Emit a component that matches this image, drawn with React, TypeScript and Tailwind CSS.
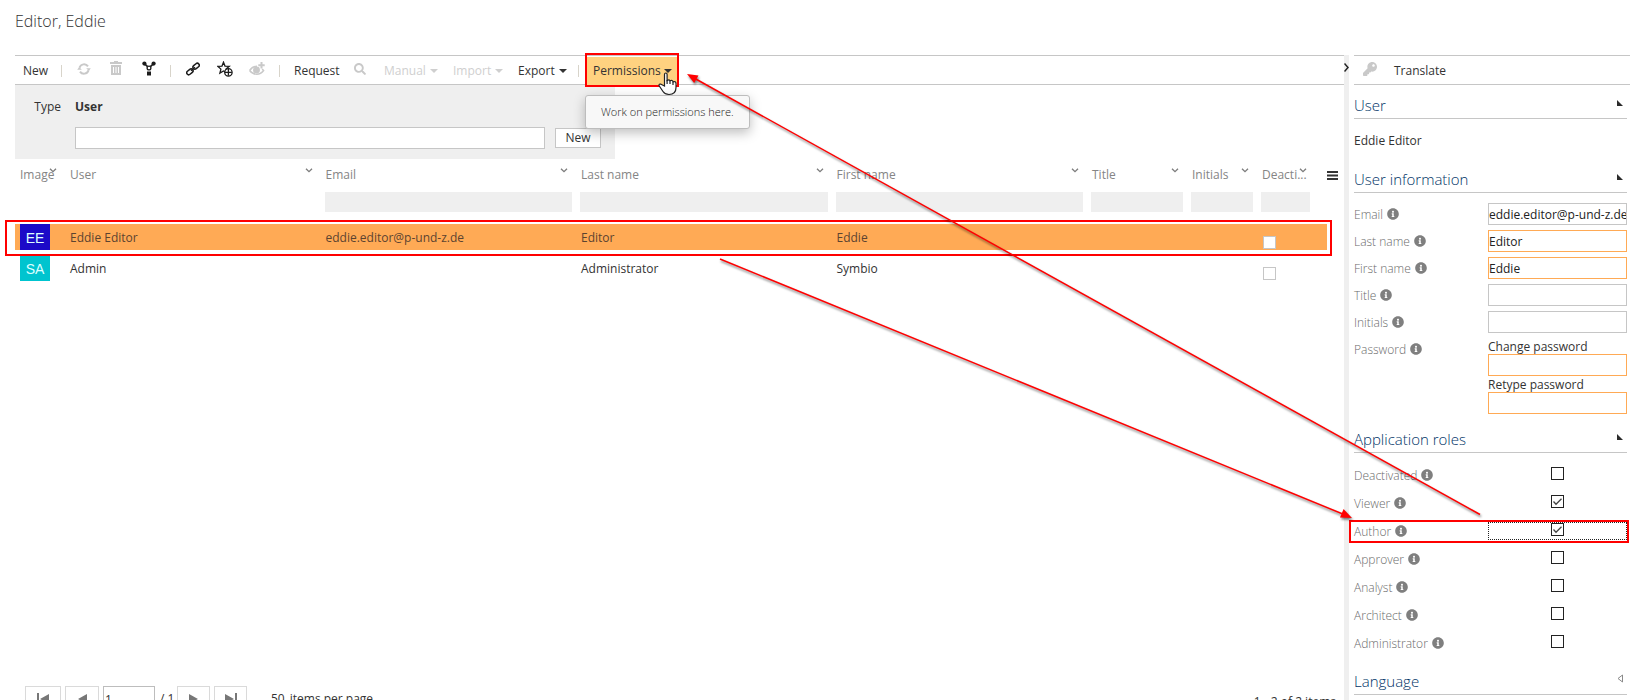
import React from 'react';
import { FaInfoCircle, FaKey, FaSearch } from 'react-icons/fa';

type Column = { label: string; filter: boolean };

const COLUMNS: Column[] = [
  { label: 'Image', filter: false },
  { label: 'User', filter: false },
  { label: 'Email', filter: true },
  { label: 'Last name', filter: true },
  { label: 'First name', filter: true },
  { label: 'Title', filter: true },
  { label: 'Initials', filter: true },
  { label: 'Deacti...', filter: true },
];

const USERS = [
  { badge: 'EE', color: 'bg-[#1c0ac8]', name: 'Eddie Editor', email: 'eddie.editor@p-und-z.de', last: 'Editor', first: 'Eddie', selected: true },
  { badge: 'SA', color: 'bg-[#00c4cf]', name: 'Admin', email: '', last: 'Administrator', first: 'Symbio', selected: false },
];

const FIELDS = [
  { label: 'Email', value: 'eddie.editor@p-und-z.de', required: false },
  { label: 'Last name', value: 'Editor', required: true },
  { label: 'First name', value: 'Eddie', required: true },
  { label: 'Title', value: '', required: false },
  { label: 'Initials', value: '', required: false },
];

const ROLES = [
  { label: 'Deactivated', checked: false },
  { label: 'Viewer', checked: true },
  { label: 'Author', checked: true },
  { label: 'Approver', checked: false },
  { label: 'Analyst', checked: false },
  { label: 'Architect', checked: false },
  { label: 'Administrator', checked: false },
];

const Separator = () => <span className="h-3 w-px shrink-0 bg-[#d8d4ca]" />;

const Caret = () => (
  <svg width="8" height="4" viewBox="0 0 8 4" className="shrink-0" fill="currentColor">
    <path d="M0 0h8L4 4z" />
  </svg>
);

const Chevron = () => (
  <svg width="8" height="5" viewBox="0 0 8 5" fill="none" stroke="#7d7d7d" strokeWidth="1.3">
    <path d="M1 .7 4 3.7 7 .7" />
  </svg>
);

const RefreshIcon = () => (
  <svg width="14" height="14" viewBox="0 0 14 14" fill="none" stroke="#c9c9c9" strokeWidth="2">
    <path d="M2.5 5.6A4.8 4.8 0 0 1 11 4.4" />
    <path d="M11.5 8.4A4.8 4.8 0 0 1 3 9.6" />
    <path d="M9.2 6.2h4.6L11.9 9z" fill="#c9c9c9" stroke="none" />
    <path d="M.2 7.8h4.6L2.3 5z" fill="#c9c9c9" stroke="none" />
  </svg>
);

const TrashIcon = () => (
  <svg width="12" height="15" viewBox="0 0 12 15" fill="#c9c9c9">
    <path d="M4 0h4v1h4v2H0V1h4z" />
    <path fillRule="evenodd" d="M1 4h10v10H1zM3 6v6h1V6zm2.5 0v6h1V6zM8 6v6h1V6z" />
  </svg>
);

const ShareIcon = () => (
  <svg width="14" height="15" viewBox="0 0 14 15" fill="#1c1c1c">
    <circle cx="2.4" cy="2.6" r="2.1" />
    <circle cx="11.6" cy="2.6" r="2.1" />
    <path d="m2.4 2.6 3.2 3M11.6 2.6l-3.2 3" stroke="#1c1c1c" strokeWidth="1.6" />
    <circle cx="7" cy="7" r="1.9" fill="#fff" stroke="#1c1c1c" strokeWidth="1.3" />
    <path d="M5 10.5h4v4H5z" />
  </svg>
);

const LinkIcon = () => (
  <svg width="14" height="14" viewBox="0 0 14 14" fill="none" stroke="#1c1c1c" strokeWidth="1.5">
    <rect x="6.6" y="2.2" width="7" height="4" rx="2" transform="rotate(-40 10.1 4.2)" />
    <rect x=".4" y="7.8" width="7" height="4" rx="2" transform="rotate(-40 3.9 9.8)" />
    <path d="m5 8.8 4-3.6" />
  </svg>
);

const StarIcon = () => (
  <svg width="16" height="16" viewBox="0 0 16 16" fill="none" stroke="#1c1c1c" strokeWidth="1.3">
    <path d="m6.5 1.2 1.5 3.9 4.3.2-3.2 2.8 1 4-3.600-2.200-3.600 2.200 1-4L.8 5.300l4.200-.2z" />
    <circle cx="11.4" cy="11.4" r="3.7" fill="#fff" />
    <path d="M11.4 8v6.8M8 11.4h6.8" />
  </svg>
);

const EyeIcon = () => (
  <svg width="16" height="14" viewBox="0 0 16 14" fill="none" stroke="#c9c9c9" strokeWidth="1.5">
    <path d="M.6 8.500C3 4.800 5.500 4.200 8 4.200M.6 8.500c4 5 10.500 5 14 0l-1.400-1.500" />
    <circle cx="7.5" cy="8" r="2.7" fill="#c9c9c9" />
    <path d="M12.5 0v6.4M9.3 3.2h6.4" strokeWidth="2" />
  </svg>
);

const HandCursor = () => (
  <svg width="19" height="24" viewBox="0 0 19 24" className="absolute left-[71px] top-[15px]" fill="#fff" stroke="#222" strokeWidth="1.2">
    <path d="M6.5 14V2.500Q6.500 1 7.800 1T9.100 2.500V8.500Q11.400 7 12 8.800 14.500 7.800 15 9.800 17.900 9 18 11.500V15.500Q18 22.500 11 22.500 7 22.500 5 19.500L1 13.500Q.8 11.600 3 12.200z" />
    <path d="M9.1 8v4M12 8.8V12M15 9.8V13" />
  </svg>
);

const SectionHeading = ({ title, open = true }: { title: string; open?: boolean }) => (
  <div className="flex h-7 items-center justify-between border-b border-[#c6c6c6] pr-1">
    <h2 className="text-[15px] leading-5 font-light text-[#003366]">{title}</h2>
    <button type="button" aria-label={title} className="mb-1">
      {open ? (
        <svg width="6" height="6" viewBox="0 0 6 6" fill="#2b2b2b"><path d="M0 0v6h6z" /></svg>
      ) : (
        <svg width="6" height="9" viewBox="0 0 6 9" fill="none" stroke="#8a8a8a"><path d="M5.5 1v7L1 4.5z" /></svg>
      )}
    </button>
  </div>
);

const FieldLabel = ({ text, id }: { text: string; id: string }) => (
  <label htmlFor={id} className="flex w-[134px] shrink-0 items-center gap-1 pt-[2px] font-light text-[#6b6b6b]">
    {text}
    <FaInfoCircle className="mb-[2px] size-3 text-[#7f7f7f]" />
  </label>
);

const Toolbar = () => (
  <div className="flex h-[30px] items-center border-y border-[#c6c6c6] pt-px pl-2">
    <button type="button" className="w-[38px] text-left">New</button>
    <Separator />
    <button type="button" aria-label="Refresh" className="mb-1 ml-[15px]"><RefreshIcon /></button>
    <button type="button" aria-label="Delete" className="mb-1 ml-[19px]"><TrashIcon /></button>
    <button type="button" aria-label="Share" className="mb-1 ml-5"><ShareIcon /></button>
    <span className="w-[14px]" />
    <Separator />
    <button type="button" aria-label="Link" className="mb-1 ml-[15px]"><LinkIcon /></button>
    <button type="button" aria-label="Add favorite" className="mb-1 ml-[17px]"><StarIcon /></button>
    <button type="button" aria-label="Watch" className="mb-1 ml-4"><EyeIcon /></button>
    <span className="w-[14px]" />
    <Separator />
    <button type="button" className="ml-[14px] w-[60px] text-left">Request</button>
    <button type="button" aria-label="Search" className="mb-1 w-[30px]"><FaSearch className="size-3 text-[#c9c9c9]" /></button>
    <button type="button" className="flex w-[69px] items-center gap-1 text-[#cfcfcf]">Manual <Caret /></button>
    <button type="button" className="flex w-[65px] items-center gap-1 text-[#cfcfcf]">Import <Caret /></button>
    <button type="button" className="flex w-[60px] items-center gap-1">Export <Caret /></button>
    <Separator />
    <div className="relative ml-2 h-7">
      <button type="button" className="flex h-7 w-[90px] items-center gap-[3px] bg-[#ffd280] pl-[6px]">Permissions <Caret /></button>
      <span className="absolute -inset-x-[2px] -top-1 -bottom-[2px] border-2 border-[#f00]" />
      <HandCursor />
      <div role="tooltip" className="absolute top-[38px] -left-[2px] z-10 flex h-[34px] items-center rounded-[3px] border border-[#bdbdbd] bg-[#f8f8f8] px-[15px] pt-px text-[11px] font-light whitespace-nowrap text-[#222] shadow-[0_4px_12px_rgba(0,0,0,0.25)]">
        Work on permissions here.
      </div>
    </div>
  </div>
);

const TypePanel = () => (
  <div className="h-[74px] w-[600px] bg-[#efefef] pt-3">
    <div className="flex h-5 items-center">
      <span className="w-[46px] text-right">Type</span>
      <span className="pl-[14px] font-bold">User</span>
    </div>
    <div className="mt-[10px] flex items-center gap-[10px] pl-[60px]">
      <input aria-label="User" className="h-[22px] w-[470px] border border-[#c6c6c6] bg-white px-1" />
      <button type="button" className="h-5 w-[46px] border border-[#c6c6c6] bg-white">New</button>
    </div>
  </div>
);

const UserTable = () => (
  <div className="flex flex-1 items-start">
    <table className="w-full table-fixed border-separate border-spacing-0 text-left">
      <colgroup>
        <col className="w-[50px]" />
        <col />
        <col />
        <col />
        <col />
        <col className="w-[100px]" />
        <col className="w-[70px]" />
        <col className="w-[70px]" />
      </colgroup>
      <thead>
        <tr className="h-[33px] text-[#858585]">
          {COLUMNS.map((col, i) => (
            <th key={col.label} className="px-[5px] pb-px font-normal">
              <span className={i === 7 ? 'relative flex w-[45px] items-center' : 'relative flex items-center'}>
                {col.label}
                <span className={i === 7 ? 'absolute right-0 bottom-[10px]' : 'absolute right-[3px] bottom-[10px]'}><Chevron /></span>
              </span>
            </th>
          ))}
        </tr>
        <tr className="h-8">
          {COLUMNS.map((col, i) => (
            <td key={col.label} className={i === 7 ? 'pr-[17px] pl-1 align-top' : 'px-1 align-top'}>
              {col.filter && <input aria-label={`Filter ${col.label}`} className="block h-5 w-full bg-[#efefef]" />}
            </td>
          ))}
        </tr>
      </thead>
      <tbody>
        {USERS.map((user) => (
          <tr key={user.badge} className={user.selected ? 'relative h-[31px] text-[#5c4330] *:border-b-[5px] *:border-white *:bg-[#ffaa55]' : 'h-[31px] *:border-b-[5px] *:border-white'}>
            <td className="p-0 pl-[5px]">
              <span className={`flex h-[26px] w-[30px] items-center justify-center pt-px font-['Liberation_Sans'] text-sm text-[#dff] ${user.color}`}>{user.badge}</span>
              {user.selected && <span className="absolute -top-1 -right-[5px] -bottom-px -left-[10px] border-2 border-[#f00]" />}
            </td>
            <td className="p-0 pt-[2px] pl-[5px]">{user.name}</td>
            <td className="p-0 pt-[2px] pl-[5px]">{user.email}</td>
            <td className="p-0 pt-[2px] pl-[5px]">{user.last}</td>
            <td className="p-0 pt-[2px] pl-[5px]">{user.first}</td>
            <td className="p-0" />
            <td className="p-0" />
            <td className="p-0 pt-3 pl-[6px] align-top">
              <input type="checkbox" aria-label={`${user.name} deactivated`} className="block size-[13px] appearance-none border border-[#c6c6c6] bg-white" />
            </td>
          </tr>
        ))}
      </tbody>
    </table>
    <div className="w-[17px] shrink-0">
      <button type="button" aria-label="Columns" className="mt-3 block">
        <svg width="11" height="9" viewBox="0 0 11 9" fill="#333"><path d="M0 0h11v2H0zM0 3.5h11v2H0zM0 7h11v2H0z" /></svg>
      </button>
    </div>
  </div>
);

const PAGER_BUTTON = 'flex h-6 items-center justify-center border border-[#dadada] bg-white pt-px';

const Pager = () => (
  <div className="-mb-3 flex h-[26px] shrink-0 items-start pl-[10px]">
    <button type="button" aria-label="First page" className={`${PAGER_BUTTON} w-9`}>
      <svg width="12" height="12" viewBox="0 0 12 12" fill="#777"><path d="M0 0h2v12H0zM12 1v10L3 6z" /></svg>
    </button>
    <button type="button" aria-label="Previous page" className={`${PAGER_BUTTON} ml-1 w-[34px]`}>
      <svg width="9" height="10" viewBox="0 0 9 10" fill="#777"><path d="M9 0v10L0 5z" /></svg>
    </button>
    <input aria-label="Page" defaultValue="1" className="ml-1 h-6 w-[52px] border border-[#bdbdbd] px-px pt-[2px]" />
    <span className="w-[22px] pt-[5px] pl-[5px] whitespace-nowrap">/ 1</span>
    <button type="button" aria-label="Next page" className={`${PAGER_BUTTON} w-[33px]`}>
      <svg width="9" height="10" viewBox="0 0 9 10" fill="#777"><path d="M0 0v10l9-5z" /></svg>
    </button>
    <button type="button" aria-label="Last page" className={`${PAGER_BUTTON} ml-1 w-[33px]`}>
      <svg width="12" height="12" viewBox="0 0 12 12" fill="#777"><path d="M10 0h2v12h-2zM0 1v10l9-5z" /></svg>
    </button>
    <span className="flex gap-[5px] pt-[5px] pl-6"><span>50</span><span>items per page</span></span>
    <span className="ml-auto pt-2 pr-2">1 - 2 of 2 items</span>
  </div>
);

const DetailPanel = () => (
  <aside className="flex w-[281px] shrink-0 flex-col pl-[5px]">
    <div className="flex h-[30px] shrink-0 items-center border-y border-[#c6c6c6] pt-px pl-[9px]">
      <button type="button" aria-label="Key" className="mb-1"><FaKey className="size-[14px] text-[#c9c9c9]" /></button>
      <button type="button" className="ml-[17px]">Translate</button>
    </div>
    <div className="pr-[3px]">
      <div className="pt-[6px]"><SectionHeading title="User" /></div>
      <p className="mt-3 mb-[14px] leading-5">Eddie Editor</p>
      <SectionHeading title="User information" />
      <div className="mt-[10px] space-y-[5px]">
        {FIELDS.map((field) => (
          <div key={field.label} className="flex h-[22px] items-center">
            <FieldLabel text={field.label} id={field.label} />
            <input
              id={field.label}
              defaultValue={field.value}
              className={field.required ? 'h-[22px] w-full min-w-0 border border-[#ffaa55] text-[#222]' : 'h-[22px] w-full min-w-0 border border-[#c6c6c6] text-[#222]'}
            />
          </div>
        ))}
        <div className="flex items-start">
          <div className="flex h-[22px] items-center"><FieldLabel text="Password" id="password" /></div>
          <div className="flex-1">
            <label htmlFor="password" className="block h-4 leading-[18px]">Change password</label>
            <input id="password" type="password" className="block h-[22px] w-full border border-[#ffaa55]" />
            <label htmlFor="retype" className="block h-4 leading-[18px]">Retype password</label>
            <input id="retype" type="password" className="block h-[22px] w-full border border-[#ffaa55]" />
          </div>
        </div>
      </div>
      <div className="mt-[11px]"><SectionHeading title="Application roles" /></div>
      <div className="mt-2">
        {ROLES.map((role) => (
          <div key={role.label} className="relative flex h-7 items-center">
            <FieldLabel text={role.label} id={role.label} />
            <div className={role.label === 'Author' ? 'flex h-[18px] flex-1 justify-center border border-dotted border-[#222]' : 'flex h-[18px] flex-1 justify-center border border-transparent'}>
              <span className="relative block size-[13px]">
                <input id={role.label} type="checkbox" defaultChecked={role.checked} className="block size-[13px] appearance-none border border-[#222] bg-white" />
                {role.checked && (
                  <svg width="13" height="13" viewBox="0 0 13 13" className="pointer-events-none absolute inset-0" fill="none" stroke="#444" strokeWidth="1.3">
                    <path d="m2.5 6.5 2.5 2.7 5.5-5.5" />
                  </svg>
                )}
              </span>
            </div>
            {role.label === 'Author' && <span className="absolute top-[3px] -right-[2px] -left-[5px] h-[23px] border-2 border-[#f00]" />}
          </div>
        ))}
      </div>
      <div className="mt-[10px]"><SectionHeading title="Language" open={false} /></div>
    </div>
  </aside>
);

const Arrows = () => (
  <svg width="1630" height="700" viewBox="0 0 1630 700" className="pointer-events-none absolute top-0 left-0 z-20 drop-shadow-[1px_2px_1px_rgba(0,0,0,0.5)]" fill="#f00">
    <path d="M720 259 1344 514.5" stroke="#f00" strokeWidth="1.5" />
    <path d="m1352 518-12-.5 3.6-8.5z" />
    <path d="M1480 514.5 694 78" stroke="#f00" strokeWidth="1.5" />
    <path d="m687 74 11.5 1.5-4.3 7.5z" />
  </svg>
);

export default function App() {
  return (
    <div className="relative flex h-screen flex-col overflow-hidden bg-white font-['Open_Sans','Noto_Sans',sans-serif] text-xs text-[#333]">
      <h1 className="flex h-[55px] shrink-0 items-start pt-[9px] pl-[15px] text-base leading-6 font-light text-[#333]">Editor, Eddie</h1>
      <div className="flex min-h-0 flex-1">
        <main className="flex min-w-0 flex-1 flex-col pl-[15px]">
          <Toolbar />
          <TypePanel />
          <UserTable />
          <Pager />
        </main>
        <div className="w-[5px] shrink-0 bg-[#efefef] pt-2">
          <button type="button" aria-label="Collapse panel" className="block">
            <svg width="5" height="9" viewBox="0 0 5 9" fill="none" stroke="#222" strokeWidth="1.5"><path d="M.5.5 4 4.5.5 8.5" /></svg>
          </button>
        </div>
        <DetailPanel />
      </div>
      <Arrows />
    </div>
  );
}
